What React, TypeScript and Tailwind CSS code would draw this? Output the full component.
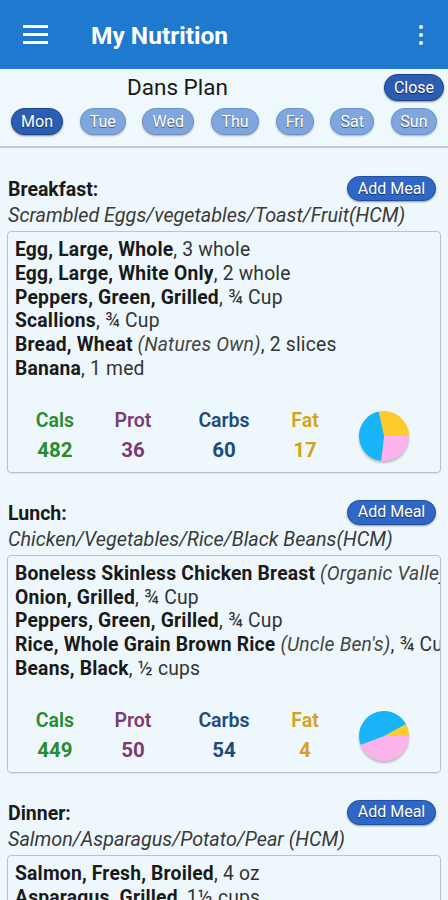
import React from "react";

type Item = { name: string; brand?: string; qty: string };
type Meal = {
  label: string;
  desc: string;
  items: Item[];
  macros?: { cals: number; prot: number; carbs: number; fat: number };
};

const meals: Meal[] = [
  {
    label: "Breakfast:",
    desc: "Scrambled Eggs/vegetables/Toast/Fruit(HCM)",
    items: [
      { name: "Egg, Large, Whole", qty: "3 whole" },
      { name: "Egg, Large, White Only", qty: "2 whole" },
      { name: "Peppers, Green, Grilled", qty: "¾ Cup" },
      { name: "Scallions", qty: "¾ Cup" },
      { name: "Bread, Wheat", brand: "(Natures Own)", qty: "2 slices" },
      { name: "Banana", qty: "1 med" },
    ],
    macros: { cals: 482, prot: 36, carbs: 60, fat: 17 },
  },
  {
    label: "Lunch:",
    desc: "Chicken/Vegetables/Rice/Black Beans(HCM)",
    items: [
      { name: "Boneless Skinless Chicken Breast", brand: "(Organic Valley)", qty: "4 oz" },
      { name: "Onion, Grilled", qty: "¾ Cup" },
      { name: "Peppers, Green, Grilled", qty: "¾ Cup" },
      { name: "Rice, Whole Grain Brown Rice", brand: "(Uncle Ben's)", qty: "¾ Cup" },
      { name: "Beans, Black", qty: "½ cups" },
    ],
    macros: { cals: 449, prot: 50, carbs: 54, fat: 4 },
  },
  {
    label: "Dinner:",
    desc: "Salmon/Asparagus/Potato/Pear (HCM)",
    items: [
      { name: "Salmon, Fresh, Broiled", qty: "4 oz" },
      { name: "Asparagus, Grilled", qty: "1½ cups" },
      { name: "Potato, Baked", qty: "1 med" },
      { name: "Pear", qty: "1 med" },
    ],
    macros: { cals: 420, prot: 30, carbs: 50, fat: 10 },
  },
];

const days = [
  { d: "Mon", w: "w-[52px]" },
  { d: "Tue", w: "w-[46px]" },
  { d: "Wed", w: "w-[52px]" },
  { d: "Thu", w: "w-[48px]" },
  { d: "Fri", w: "w-[38px]" },
  { d: "Sat", w: "w-[44px]" },
  { d: "Sun", w: "w-[46px]" },
];

function Pie({ prot, carbs, fat }: { prot: number; carbs: number; fat: number }) {
  const p = prot * 4;
  const c = carbs * 4;
  const f = fat * 9;
  const total = p + c + f;
  const r = 25;
  const cx = 25;
  const cy = 25;
  const pt = (deg: number) => {
    const a = (deg * Math.PI) / 180;
    return `${cx + r * Math.cos(a)} ${cy + r * Math.sin(a)}`;
  };
  const slice = (start: number, end: number, color: string) => {
    const large = end - start > 180 ? 1 : 0;
    return (
      <path
        d={`M ${cx} ${cy} L ${pt(start)} A ${r} ${r} 0 ${large} 1 ${pt(end)} Z`}
        fill={color}
      />
    );
  };
  const fatDeg = (f / total) * 360;
  const protDeg = (p / total) * 360;
  return (
    <svg width="50" height="50" viewBox="0 0 50 50" className="drop-shadow-[0_2px_1px_rgba(0,0,0,0.25)]">
      {slice(-fatDeg, 0, "#ffca2c")}
      {slice(0, protDeg, "#fbb3ec")}
      {slice(protDeg, 360 - fatDeg, "#17b5f8")}
    </svg>
  );
}

function Pill({ children, dark, w }: { children: React.ReactNode; dark?: boolean; w?: string }) {
  return (
    <div
      className={`${w ?? ""} flex h-[27px] items-center justify-center rounded-full border text-[16px] text-white [text-shadow:0_1px_1px_rgba(0,0,0,0.55)] ${
        dark
          ? "border-[#1c4590] bg-[#2b5db3] shadow-[0_1px_2px_rgba(0,0,0,0.45)]"
          : "border-[#6a90c8] bg-[#80a7dd] shadow-[0_1px_2px_rgba(0,0,0,0.3)]"
      }`}
    >
      {children}
    </div>
  );
}

function MealSection({ meal, first }: { meal: Meal; first: boolean }) {
  return (
    <div className={first ? "mt-[28px]" : "mt-[27px]"}>
      <div className="flex h-[25px] items-center justify-between">
        <div className="pl-[1px] pt-[3px] text-[19.5px] font-bold text-[#1a1a1a]">{meal.label}</div>
        <div className="mr-[5px] flex h-[25px] w-[89px] items-center justify-center rounded-full border border-[#1f4f9e] bg-[#2f67c6] text-[16px] text-white shadow-[0_1px_2px_rgba(0,0,0,0.4)] [text-shadow:0_1px_1px_rgba(0,0,0,0.55)]">
          Add Meal
        </div>
      </div>
      <div className="flex h-[30px] items-center whitespace-nowrap pl-[1px] text-[19.8px] italic text-[#3a3a3a]">
        {meal.desc}
      </div>
      <div className="overflow-hidden rounded-[4px] border border-[#bcc3c7] pb-[6px] pt-[6px] shadow-[0_1px_1px_rgba(0,0,0,0.08)]">
        <div className="pl-[7px] text-[19.3px] leading-[23.8px] tracking-[0.2px]">
          {meal.items.map((it, i) => (
            <div key={i} className="whitespace-nowrap">
              <span className="font-bold text-[#1a1a1a]">{it.name}</span>
              {it.brand && <span className="italic text-[#444]"> {it.brand}</span>}
              <span className="text-[#333]">, {it.qty}</span>
            </div>
          ))}
        </div>
        {meal.macros && (
          <div className="mt-[25px] flex items-center">
            <div className="w-[94px] text-center">
              <div className="flex h-[30px] items-center justify-center text-[19.5px] font-semibold text-[#2a8a2e]">Cals</div>
              <div className="flex h-[30px] items-center justify-center text-[20.5px] font-bold text-[#2a8a2e]">{meal.macros.cals}</div>
            </div>
            <div className="w-[62px] text-center">
              <div className="flex h-[30px] items-center justify-center text-[19.5px] font-semibold text-[#7d3b74]">Prot</div>
              <div className="flex h-[30px] items-center justify-center text-[20.5px] font-bold text-[#7d3b74]">{meal.macros.prot}</div>
            </div>
            <div className="w-[120px] text-center">
              <div className="flex h-[30px] items-center justify-center text-[19.5px] font-semibold text-[#1d4c7c]">Carbs</div>
              <div className="flex h-[30px] items-center justify-center text-[20.5px] font-bold text-[#1d4c7c]">{meal.macros.carbs}</div>
            </div>
            <div className="w-[42px] text-center">
              <div className="flex h-[30px] items-center justify-center text-[19.5px] font-semibold text-[#d6a21d]">Fat</div>
              <div className="flex h-[30px] items-center justify-center text-[20.5px] font-bold text-[#d6a21d]">{meal.macros.fat}</div>
            </div>
            <div className="ml-[33px] flex items-center">
              <Pie prot={meal.macros.prot} carbs={meal.macros.carbs} fat={meal.macros.fat} />
            </div>
          </div>
        )}
      </div>
    </div>
  );
}

export default function App() {
  return (
    <div className="h-[900px] w-[448px] overflow-hidden bg-[#eef8fc] font-['Roboto','Liberation_Sans',sans-serif]">
      <div className="flex h-[69px] items-center bg-[#1f7acf]">
        <div className="ml-[23px] flex w-[25px] flex-col gap-[5px]">
          <div className="h-[3px] bg-white" />
          <div className="h-[3px] bg-white" />
          <div className="h-[3px] bg-white" />
        </div>
        <div className="ml-[43px] pt-[3px] text-[24.5px] font-bold text-white">My Nutrition</div>
        <div className="ml-auto mr-[25px] flex flex-col items-center gap-[4px]">
          <div className="h-[4px] w-[4px] rounded-full bg-white" />
          <div className="h-[4px] w-[4px] rounded-full bg-white" />
          <div className="h-[4px] w-[4px] rounded-full bg-white" />
        </div>
      </div>
      <div className="h-[79px] border-b-[2px] border-[#c6cacc] bg-[#eff9fd]">
        <div className="flex h-[35px] items-start">
          <div className="ml-[127px] pt-[2px] text-[22.5px] leading-[32px] text-[#1a1a1a]">Dans Plan</div>
          <div className="ml-auto mr-[4px] pt-[5px]">
            <Pill dark w="w-[60px] h-[25px]">Close</Pill>
          </div>
        </div>
        <div className="mt-[4px] flex items-center justify-between pl-[11px] pr-[11px]">
          {days.map((x, i) => (
            <Pill key={x.d} dark={i === 0} w={x.w}>
              {x.d}
            </Pill>
          ))}
        </div>
      </div>
      <div className="px-[7px]">
        {meals.map((m, i) => (
          <MealSection key={m.label} meal={m} first={i === 0} />
        ))}
      </div>
    </div>
  );
}
